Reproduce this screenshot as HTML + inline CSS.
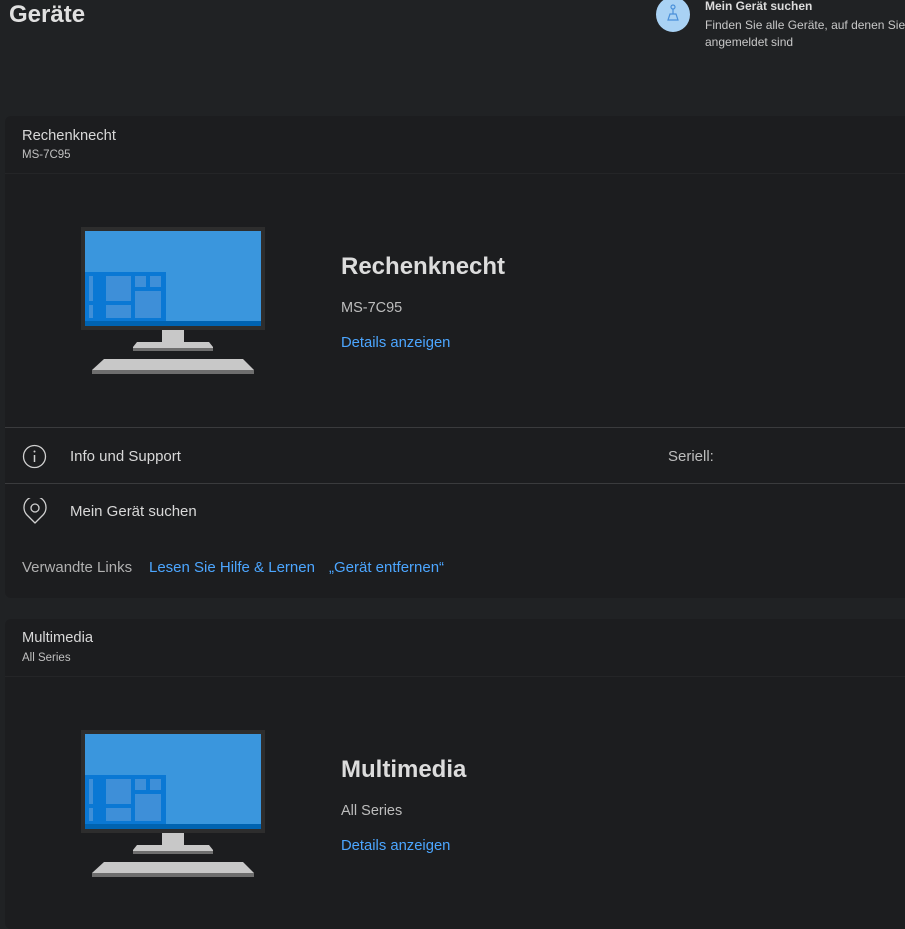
<!DOCTYPE html>
<html><head><meta charset="utf-8"><style>
*{margin:0;padding:0;box-sizing:border-box}
body{width:905px;height:915px;overflow:hidden;background:#202224;font-family:"Segoe UI","Liberation Sans",sans-serif;color:#d6d6d6;position:relative}
.a{position:absolute;white-space:nowrap}
.card{position:absolute;left:5px;width:910px;background:#1c1d1f;border-radius:6px}
.sep{position:absolute;left:5px;width:900px;height:1px}
.link{color:#4ca6ff}
</style></head><body>
<div class="a" style="left:9px;top:1px;font-size:24px;font-weight:bold;color:#e0e0e0">Geräte</div>
<div class="a" style="left:656px;top:-3px;width:34px;height:35px;border-radius:50%;background:#a9d2f4"></div>
<svg class="a" style="left:664px;top:4px" width="18" height="18" viewBox="0 0 18 18"><circle cx="9" cy="3" r="2" fill="none" stroke="#4a90d9" stroke-width="1.2"/><path d="M9 5V10M4 16L6 10H12L14 16Z" fill="none" stroke="#4a90d9" stroke-width="1.2"/></svg>
<div class="a" style="left:705px;top:-1px;font-size:12px;font-weight:bold;color:#dcdcdc">Mein Gerät suchen</div>
<div class="a" style="left:705px;top:17px;font-size:12px;color:#c8c8c8;line-height:17px">Finden Sie alle Geräte, auf denen Sie<br>angemeldet sind</div>

<div class="card" style="top:116px;height:482px"></div>
<div class="a" style="left:22px;top:128px;font-size:14.7px;color:#d8d8d8">Rechenknecht</div>
<div class="a" style="left:22px;top:149px;font-size:11.5px;color:#c0c0c0">MS-7C95</div>
<div class="sep" style="top:173px;background:#242527"></div>

<svg class="a" style="left:81px;top:227px" width="184" height="148" viewBox="81 227 184 148">
<rect x="81" y="227" width="184" height="103" fill="#2d2d2d"/>
<rect x="85" y="231" width="176" height="95" fill="#3a96dd"/>
<rect x="85" y="272" width="81" height="54" fill="#0a78d4"/>
<rect x="85" y="321" width="176" height="5" fill="#0063b1"/>
<g fill="#3e8fd8"><rect x="89" y="276" width="4" height="25"/><rect x="89" y="305" width="4" height="13"/><rect x="106" y="276" width="25" height="25"/><rect x="106" y="305" width="25" height="13"/><rect x="135" y="276" width="11" height="11"/><rect x="150" y="276" width="11" height="11"/><rect x="135" y="291" width="26" height="27"/></g>
<rect x="162" y="330" width="22" height="13" fill="#c8c8c8"/>
<path d="M137 342H209L213 347V351H133V347Z" fill="#c8c8c8"/><rect x="133" y="348" width="80" height="3" fill="#6e6e6e"/>
<path d="M104 359H243L254 370V374H92V370Z" fill="#c8c8c8"/><rect x="92" y="370" width="162" height="4" fill="#6e6e6e"/>
</svg>
<div class="a" style="left:341px;top:253px;font-size:24px;font-weight:bold;color:#dcdcdc">Rechenknecht</div>
<div class="a" style="left:341px;top:300px;font-size:14.5px;color:#bdbdbd">MS-7C95</div>
<div class="a link" style="left:341px;top:335px;font-size:14.8px">Details anzeigen</div>

<div class="sep" style="top:427px;background:#3a3b3d"></div>
<svg class="a" style="left:22px;top:444px" width="25" height="25" viewBox="0 0 25 25"><circle cx="12.5" cy="12.5" r="11" fill="none" stroke="#d0d0d0" stroke-width="1.3"/><circle cx="12.5" cy="7.5" r="1" fill="#d0d0d0"/><path d="M12.5 11V18" stroke="#d0d0d0" stroke-width="1.5"/></svg>
<div class="a" style="left:70px;top:448px;font-size:15px;color:#d8d8d8">Info und Support</div>
<div class="a" style="left:668px;top:448px;font-size:15px;color:#bdbdbd">Seriell:</div>
<div class="sep" style="top:483px;background:#3a3b3d"></div>
<svg class="a" style="left:23px;top:498px" width="24" height="27" viewBox="0 0 24 27"><path d="M12 25L4 17A11 11 0 1 1 20 17Z" fill="none" stroke="#d0d0d0" stroke-width="1.3" stroke-linejoin="round"/><circle cx="12" cy="10" r="4" fill="none" stroke="#d0d0d0" stroke-width="1.3"/></svg>
<div class="a" style="left:70px;top:503px;font-size:15px;color:#d8d8d8">Mein Gerät suchen</div>
<div class="a" style="left:22px;top:559px;font-size:15px;color:#b0b0b0">Verwandte Links</div>
<div class="a link" style="left:149px;top:559px;font-size:15px">Lesen Sie Hilfe &amp; Lernen</div>
<div class="a link" style="left:329px;top:559px;font-size:15px">„Gerät entfernen“</div>

<div class="card" style="top:619px;height:310px"></div>
<div class="a" style="left:22px;top:630px;font-size:14.7px;color:#d8d8d8">Multimedia</div>
<div class="a" style="left:22px;top:652px;font-size:11.5px;color:#c0c0c0">All Series</div>
<div class="sep" style="top:676px;background:#242527"></div>
<svg class="a" style="left:81px;top:730px" width="184" height="148" viewBox="81 227 184 148">
<rect x="81" y="227" width="184" height="103" fill="#2d2d2d"/>
<rect x="85" y="231" width="176" height="95" fill="#3a96dd"/>
<rect x="85" y="272" width="81" height="54" fill="#0a78d4"/>
<rect x="85" y="321" width="176" height="5" fill="#0063b1"/>
<g fill="#3e8fd8"><rect x="89" y="276" width="4" height="25"/><rect x="89" y="305" width="4" height="13"/><rect x="106" y="276" width="25" height="25"/><rect x="106" y="305" width="25" height="13"/><rect x="135" y="276" width="11" height="11"/><rect x="150" y="276" width="11" height="11"/><rect x="135" y="291" width="26" height="27"/></g>
<rect x="162" y="330" width="22" height="13" fill="#c8c8c8"/>
<path d="M137 342H209L213 347V351H133V347Z" fill="#c8c8c8"/><rect x="133" y="348" width="80" height="3" fill="#6e6e6e"/>
<path d="M104 359H243L254 370V374H92V370Z" fill="#c8c8c8"/><rect x="92" y="370" width="162" height="4" fill="#6e6e6e"/>
</svg>
<div class="a" style="left:341px;top:756px;font-size:24px;font-weight:bold;color:#dcdcdc">Multimedia</div>
<div class="a" style="left:341px;top:803px;font-size:14.5px;color:#bdbdbd">All Series</div>
<div class="a link" style="left:341px;top:838px;font-size:14.8px">Details anzeigen</div>
</body></html>
